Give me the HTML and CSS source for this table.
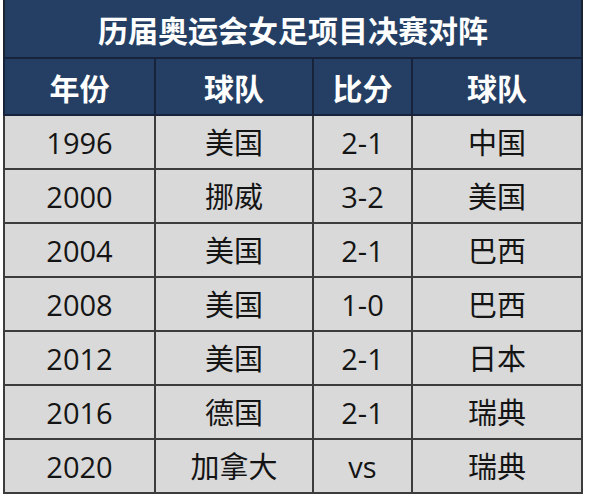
FILE: index.html
```html
<!DOCTYPE html>
<html lang="zh">
<head>
<meta charset="utf-8">
<link rel="stylesheet" href="styles.css">
</head>
<body>
<div class="sheet">
<table class="results">
  <colgroup>
    <col class="c1"><col class="c2"><col class="c3"><col class="c4">
  </colgroup>
  <thead>
    <tr class="title-row"><th colspan="4">历届奥运会女足项目决赛对阵</th></tr>
    <tr class="head-row"><th>年份</th><th>球队</th><th>比分</th><th>球队</th></tr>
  </thead>
  <tbody>
    <tr><td>1996</td><td>美国</td><td>2-1</td><td>中国</td></tr>
    <tr><td>2000</td><td>挪威</td><td>3-2</td><td>美国</td></tr>
    <tr><td>2004</td><td>美国</td><td>2-1</td><td>巴西</td></tr>
    <tr><td>2008</td><td>美国</td><td>1-0</td><td>巴西</td></tr>
    <tr><td>2012</td><td>美国</td><td>2-1</td><td>日本</td></tr>
    <tr><td>2016</td><td>德国</td><td>2-1</td><td>瑞典</td></tr>
    <tr><td>2020</td><td>加拿大</td><td>vs</td><td>瑞典</td></tr>
  </tbody>
</table>
</div>
</body>
</html>
```
FILE: styles.css
```css
html, body {
  margin: 0;
  padding: 0;
  background: #ffffff;
}
.sheet {
  padding-left: 3px;
  font-family: "Noto Sans CJK SC", "Noto Sans", sans-serif;
}
.results {
  border-collapse: collapse;
  table-layout: fixed;
  width: 578px;
}
.c1 { width: 151px; }
.c2 { width: 158px; }
.c3 { width: 99px; }
.c4 { width: 170px; }
.results th,
.results td {
  padding: 0;
  text-align: center;
  vertical-align: middle;
  line-height: 1;
}
.title-row th {
  height: 57px;
  background: #243f63;
  color: #ffffff;
  font-size: 30px;
  font-weight: 700;
  border-left: 2px solid #1a2433;
  border-right: 2px solid #1a2433;
  border-bottom: 2px solid #16233a;
}
.head-row th {
  height: 55px;
  background: #243f63;
  color: #ffffff;
  font-size: 30px;
  font-weight: 700;
  border: 2px solid #16233a;
}
.results td {
  height: 52px;
  background: #d9d9d9;
  color: #141414;
  font-family: "Open Sans", "Noto Sans CJK SC", sans-serif;
  font-size: 29px;
  font-weight: 400;
  border: 2px solid #3c3c3c;
}
```
